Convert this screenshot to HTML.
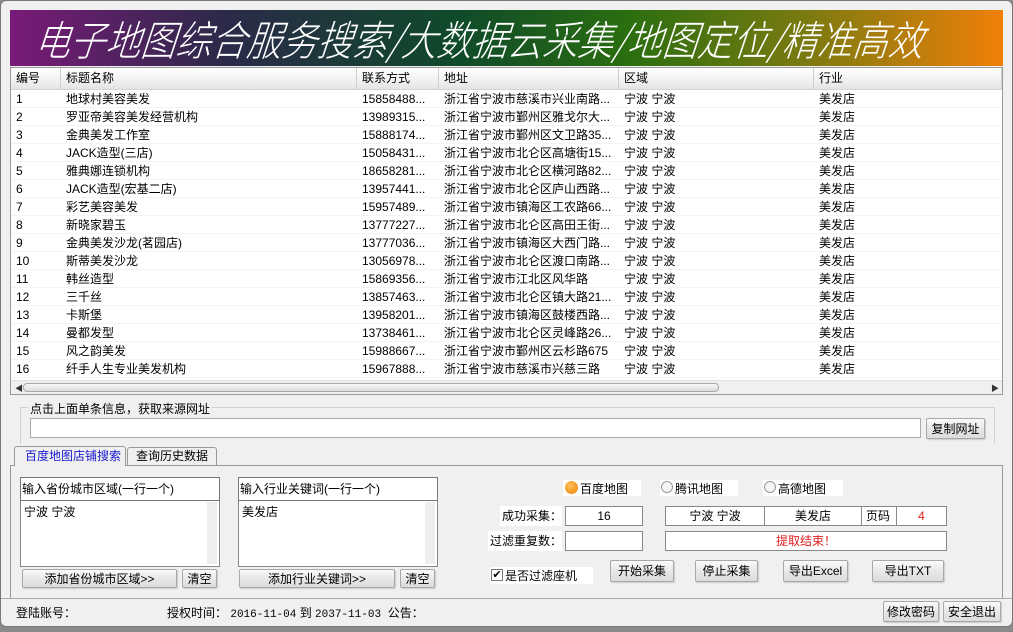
<!DOCTYPE html>
<html><head><meta charset="utf-8"><style>
*{box-sizing:border-box;margin:0;padding:0}
body{width:1013px;height:632px;background:#8a8a8a;font-family:"Liberation Sans","Noto Sans CJK SC",sans-serif;font-size:12px;color:#000;position:relative;overflow:hidden}
.a{position:absolute}
#win{left:0;top:0;width:1013px;height:627px;background:#f0f0f0;border:1px solid #777;border-radius:6px}
#ban{left:10px;top:10px;width:993px;height:56px;background:linear-gradient(90deg,#7a1a78 0%,#2a2a48 22%,#0f4a2a 45%,#2a6e10 62%,#7a7a10 80%,#f08008 100%);overflow:hidden}
#bt{left:26px;top:3px;color:#fff;font-family:"Noto Sans CJK SC",sans-serif;font-style:italic;font-size:36px;line-height:50px;white-space:nowrap;transform:scale(0.98,1.15) skewX(-8deg);transform-origin:0 50%;font-weight:300}
#tbl{left:10px;top:67px;width:993px;height:328px;background:#fff;border:1px solid #999}
.h{top:0;height:22px;line-height:21px;background:linear-gradient(#fff,#f1f1f1 60%,#e4e4e4);border-right:1px solid #d0d0d0;border-bottom:1px solid #d5d5d5;padding-left:5px}
.r{left:0;width:991px;height:18px;border-bottom:1px solid #f4f4f4}
.c{top:0;height:18px;line-height:18px;padding-left:5px;white-space:nowrap;overflow:hidden}
.btn{border:1px solid #a8a8a8;border-radius:2px;background:linear-gradient(#fafafa,#e8e8e8 50%,#dcdcdc);text-align:center;box-shadow:1px 1px 1px #ccc}
.box{background:#fff;border:1px solid #888}
</style></head><body>
<div id="win" class="a"></div>
<div id="ban" class="a"><div id="bt" class="a">电子地图综合服务搜索/大数据云采集/地图定位/精准高效</div></div>
<div id="tbl" class="a">
<div class="a h" style="left:0;width:50px">编号</div>
<div class="a h" style="left:50px;width:296px">标题名称</div>
<div class="a h" style="left:346px;width:82px">联系方式</div>
<div class="a h" style="left:428px;width:180px">地址</div>
<div class="a h" style="left:608px;width:195px">区域</div>
<div class="a h" style="left:803px;width:188px">行业</div>
<div id="rows" class="a" style="left:0;top:22px;width:991px"></div>
<div class="a" style="left:0;top:312px;width:991px;height:14px;background:#f0f0f0;border-top:1px solid #e0e0e0">
<div class="a" style="left:4px;top:2px;font-size:8px;color:#333">◀</div>
<div class="a" style="left:12px;top:2px;width:696px;height:9px;border:1px solid #aaa;border-radius:4px;background:linear-gradient(#f8f8f8,#dcdcdc)"></div>
<div class="a" style="right:3px;top:2px;font-size:8px;color:#333">▶</div>
</div>
</div>
<div class="a" style="left:20px;top:407px;width:975px;height:37px;border:1px solid #d0d0d0;border-bottom:none"></div>
<div class="a" style="left:28px;top:400px;background:#f0f0f0;padding:0 2px">点击上面单条信息，获取来源网址</div>
<div class="a box" style="left:30px;top:418px;width:891px;height:20px;border-color:#aaa"></div>
<div class="a btn" style="left:926px;top:418px;width:59px;height:21px;line-height:20px">复制网址</div>
<div class="a" style="left:10px;top:465px;width:993px;height:133px;border:1px solid #999;border-bottom:none"></div>
<div class="a" style="left:14px;top:446px;width:112px;height:20px;background:#f0f0f0;border:1px solid #999;border-bottom:none;color:#1a1ad0;line-height:19px;padding-left:10px;border-radius:3px 3px 0 0">百度地图店铺搜索</div>
<div class="a" style="left:127px;top:447px;width:90px;height:18px;border:1px solid #999;border-bottom:none;line-height:17px;padding-left:8px;border-radius:3px 3px 0 0">查询历史数据</div>
<div class="a box" style="left:20px;top:477px;width:200px;height:90px"></div>
<div class="a" style="left:20px;top:477px;width:200px;height:24px;border:1px solid #777;line-height:22px;padding-left:1px;background:#fff">输入省份城市区域(一行一个)</div>
<div class="a" style="left:24px;top:503px">宁波 宁波</div>
<div class="a" style="left:207px;top:502px;width:10px;height:62px;background:#eee"></div>
<div class="a btn" style="left:22px;top:569px;width:155px;height:19px;line-height:18px">添加省份城市区域&gt;&gt;</div>
<div class="a btn" style="left:182px;top:569px;width:35px;height:19px;line-height:18px">清空</div>
<div class="a box" style="left:238px;top:477px;width:200px;height:90px"></div>
<div class="a" style="left:238px;top:477px;width:200px;height:24px;border:1px solid #777;line-height:22px;padding-left:1px;background:#fff">输入行业关键词(一行一个)</div>
<div class="a" style="left:242px;top:503px">美发店</div>
<div class="a" style="left:425px;top:502px;width:10px;height:62px;background:#eee"></div>
<div class="a btn" style="left:239px;top:569px;width:156px;height:19px;line-height:18px">添加行业关键词&gt;&gt;</div>
<div class="a btn" style="left:400px;top:569px;width:35px;height:19px;line-height:18px">清空</div>
<div class="a" style="left:563px;top:480px;width:78px;height:16px;background:#fff"></div>
<div class="a" style="left:565px;top:481px;width:13px;height:13px;border-radius:50%;background:radial-gradient(circle at 40% 35%,#ffc060,#f08000)"></div>
<div class="a" style="left:580px;top:480px">百度地图</div>
<div class="a" style="left:660px;top:480px;width:78px;height:16px;background:#fff"></div>
<div class="a" style="left:661px;top:481px;width:12px;height:12px;border-radius:50%;border:1px solid #999;background:#f6f6f6"></div>
<div class="a" style="left:675px;top:480px">腾讯地图</div>
<div class="a" style="left:763px;top:480px;width:80px;height:16px;background:#fff"></div>
<div class="a" style="left:764px;top:481px;width:12px;height:12px;border-radius:50%;border:1px solid #999;background:#f6f6f6"></div>
<div class="a" style="left:778px;top:480px">高德地图</div>
<div class="a" style="left:500px;top:506px;width:62px;height:20px;background:#fff;line-height:20px;text-align:right">成功采集：</div>
<div class="a box" style="left:565px;top:506px;width:78px;height:20px;text-align:center;line-height:18px">16</div>
<div class="a" style="left:488px;top:531px;width:74px;height:20px;background:#fff;line-height:20px;text-align:right">过滤重复数：</div>
<div class="a box" style="left:565px;top:531px;width:78px;height:20px"></div>
<div class="a box" style="left:665px;top:506px;width:282px;height:20px;line-height:18px">
<div class="a" style="left:0;width:99px;text-align:center;border-right:1px solid #888;height:18px">宁波 宁波</div>
<div class="a" style="left:99px;width:97px;text-align:center;border-right:1px solid #888;height:18px">美发店</div>
<div class="a" style="left:196px;width:35px;padding-left:4px;border-right:1px solid #888;height:18px">页码</div>
<div class="a" style="left:231px;width:49px;text-align:center;color:#e02020">4</div>
</div>
<div class="a box" style="left:665px;top:531px;width:282px;height:20px;line-height:18px;text-align:center;color:#e02020">提取结束！</div>
<div class="a" style="left:490px;top:567px;width:103px;height:17px;background:#fff"></div>
<div class="a" style="left:491px;top:569px;width:12px;height:12px;border:1px solid #777;background:#fff;font-size:11px;line-height:10px;text-align:center">✔</div>
<div class="a" style="left:505px;top:567px">是否过滤座机</div>
<div class="a btn" style="left:610px;top:560px;width:64px;height:22px;line-height:20px">开始采集</div>
<div class="a btn" style="left:695px;top:560px;width:63px;height:22px;line-height:20px">停止采集</div>
<div class="a btn" style="left:783px;top:560px;width:65px;height:22px;line-height:20px">导出Excel</div>
<div class="a btn" style="left:872px;top:560px;width:72px;height:22px;line-height:20px">导出TXT</div>
<div class="a" style="left:1px;top:598px;width:1011px;height:1px;background:#aaa"></div>
<div class="a" style="left:16px;top:604px">登陆账号：</div>
<div class="a" style="left:167px;top:604px;white-space:pre">授权时间： <span style="font-family:'Liberation Mono',monospace;font-size:11px">2016-11-04</span> 到 <span style="font-family:'Liberation Mono',monospace;font-size:11px">2037-11-03</span>  公告：</div>
<div class="a btn" style="left:883px;top:601px;width:56px;height:21px;line-height:20px">修改密码</div>
<div class="a btn" style="left:943px;top:601px;width:58px;height:21px;line-height:20px">安全退出</div>
<script>
var d=[["地球村美容美发","15858488...","浙江省宁波市慈溪市兴业南路..."],["罗亚帝美容美发经营机构","13989315...","浙江省宁波市鄞州区雅戈尔大..."],["金典美发工作室","15888174...","浙江省宁波市鄞州区文卫路35..."],["JACK造型(三店)","15058431...","浙江省宁波市北仑区高塘街15..."],["雅典娜连锁机构","18658281...","浙江省宁波市北仑区横河路82..."],["JACK造型(宏基二店)","13957441...","浙江省宁波市北仑区庐山西路..."],["彩艺美容美发","15957489...","浙江省宁波市镇海区工农路66..."],["新晓家碧玉","13777227...","浙江省宁波市北仑区高田王街..."],["金典美发沙龙(茗园店)","13777036...","浙江省宁波市镇海区大西门路..."],["斯蒂美发沙龙","13056978...","浙江省宁波市北仑区渡口南路..."],["韩丝造型","15869356...","浙江省宁波市江北区风华路"],["三千丝","13857463...","浙江省宁波市北仑区镇大路21..."],["卡斯堡","13958201...","浙江省宁波市镇海区鼓楼西路..."],["曼都发型","13738461...","浙江省宁波市北仑区灵峰路26..."],["风之韵美发","15988667...","浙江省宁波市鄞州区云杉路675"],["纤手人生专业美发机构","15967888...","浙江省宁波市慈溪市兴慈三路"]];
var h="";d.forEach(function(r,i){h+='<div class="a r" style="top:'+(i*18)+'px"><div class="a c" style="left:0;width:50px">'+(i+1)+'</div><div class="a c" style="left:50px;width:296px">'+r[0]+'</div><div class="a c" style="left:346px;width:82px">'+r[1]+'</div><div class="a c" style="left:428px;width:180px">'+r[2]+'</div><div class="a c" style="left:608px;width:195px">宁波 宁波</div><div class="a c" style="left:803px;width:188px">美发店</div></div>';});
document.getElementById("rows").innerHTML=h;
</script>
</body></html>
